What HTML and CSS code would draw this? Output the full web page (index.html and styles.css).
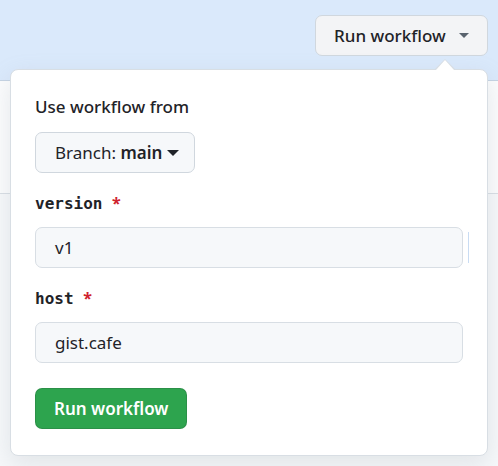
FILE: index.html
```html
<!DOCTYPE html>
<html>
<head>
<meta charset="utf-8">
<link rel="stylesheet" href="styles.css">
</head>
<body>
<div class="banner">
  <button class="btn-top">Run workflow <span class="caret"></span></button>
</div>
<div class="runs-head"></div>
<div class="runs-body"></div>

<div class="popover">
  <div class="title">Use workflow from</div>
  <button class="btn-branch">Branch: <b>main</b><span class="caret"></span></button>

  <div class="field">
    <label class="label">version <span class="req">*</span></label>
    <div class="input-wrap marker"><div class="input">v1</div></div>
  </div>

  <div class="field">
    <label class="label">host <span class="req">*</span></label>
    <div class="input-wrap"><div class="input">gist.cafe</div></div>
  </div>

  <button class="btn-run">Run workflow</button>
</div>
</body>
</html>
```

FILE: styles.css
```css
* { box-sizing: border-box; }
html, body { margin: 0; padding: 0; }
body {
  width: 498px;
  height: 466px;
  overflow: hidden;
  position: relative;
  background: #f6f8fa;
  font-family: "Noto Sans", "Open Sans", sans-serif;
  color: #1f2328;
  font-size: 17px;
}
.banner {
  height: 81px;
  background: #dae9fb;
  border-bottom: 1px solid #c5d3e3;
  display: flex;
  justify-content: flex-end;
  align-items: flex-start;
  padding: 15px 10px 0 0;
}
.runs-head {
  height: 113px;
  background: #fbfcfd;
  border-bottom: 1px solid #d8dee4;
}
.caret {
  display: inline-block;
  width: 0; height: 0;
  border-left: 5px solid transparent;
  border-right: 5px solid transparent;
  border-top: 5px solid currentColor;
  vertical-align: middle;
}
.btn-top {
  font: inherit;
  font-weight: 500;
  height: 41px;
  width: 173px;
  border: 1px solid #d0d7de;
  border-radius: 7px;
  background: #f3f4f6;
  color: #1f2328;
  padding: 0 0 0 18px;
  display: flex;
  align-items: center;
  gap: 13px;
  white-space: nowrap;
}
.btn-top .caret { color: #59636e; }

.popover {
  position: absolute;
  left: 10px;
  top: 69px;
  width: 478px;
  height: 387px;
  background: #fff;
  border: 1px solid #d8dee4;
  border-radius: 8px;
  box-shadow: 0 8px 24px rgba(140, 149, 159, 0.2);
  padding: 25px 24px 25px 24px;
  display: flex;
  flex-direction: column;
  align-items: flex-start;
}
.popover::before {
  content: "";
  position: absolute;
  top: -11px;
  left: 424px;
  border-left: 10px solid transparent;
  border-right: 10px solid transparent;
  border-bottom: 10px solid #d8dee4;
}
.popover::after {
  content: "";
  position: absolute;
  top: -10px;
  left: 425px;
  border-left: 9px solid transparent;
  border-right: 9px solid transparent;
  border-bottom: 10px solid #fff;
}
.title {
  height: 23px;
  line-height: 23px;
  font-weight: 500;
}
.btn-branch {
  margin-top: 14px;
  font: inherit;
  height: 41px;
  padding: 0 15px 0 19px;
  border: 1px solid #d0d7de;
  border-radius: 7px;
  background: #f6f8fa;
  color: #1f2328;
  display: flex;
  align-items: center;
  white-space: pre;
}
.btn-branch b { font-weight: 600; }
.btn-branch .caret { margin-left: 5px; color: #1f2328; border-left-width: 6px; border-right-width: 6px; border-top-width: 6px; }
.field {
  margin-top: 20px;
  width: 428px;
  display: flex;
  flex-direction: column;
}
.label {
  display: block;
  height: 22px;
  font-family: "DejaVu Sans Mono", "Liberation Mono", monospace;
  font-weight: 700;
  font-size: 16px;
  line-height: 22px;
}
.req {
  color: #cf222e;
  font-family: "Noto Sans", sans-serif;
  line-height: 1;
}
.input-wrap {
  margin-top: 12px;
  position: relative;
}
.marker::after {
  content: "";
  position: absolute;
  left: 433px;
  top: 5px;
  width: 1px;
  height: 31px;
  background: #c9dcf3;
}
.input {
  height: 41px;
  border: 1px solid #d8dee4;
  border-radius: 7px;
  background: #f6f8fa;
  padding: 0 19px;
  display: flex;
  align-items: center;
}
.btn-run {
  margin-top: 25px;
  font: inherit;
  font-weight: 600;
  height: 41px;
  padding: 0 18px;
  border: 1px solid rgba(31, 35, 40, 0.15);
  border-radius: 7px;
  background: #2da44e;
  color: #fff;
  white-space: nowrap;
}
```
